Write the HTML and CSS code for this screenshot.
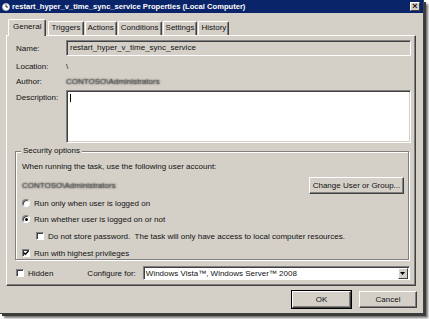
FILE: index.html
```html
<!DOCTYPE html>
<html>
<head>
<meta charset="utf-8">
<link rel="stylesheet" href="styles.css">
</head>
<body>
<div class="window">
  <div class="titlebar">
    <svg class="ticon" width="8" height="8" viewBox="0 0 8 8"><circle cx="4" cy="4" r="3.5" fill="#fff" stroke="#c8c8d8" stroke-width="0.8"/><path d="M4 1.5V4H6" stroke="#223" stroke-width="1" fill="none"/></svg>
    <span class="title">restart_hyper_v_time_sync_service Properties (Local Computer)</span>
    <span class="close">×</span>
  </div>
  <div class="main">
    <div class="tabs">
      <div class="tab active">General</div>
      <div class="tab">Triggers</div>
      <div class="tab">Actions</div>
      <div class="tab">Conditions</div>
      <div class="tab">Settings</div>
      <div class="tab">History</div>
    </div>
    <div class="panel">
      <div class="row row-name">
        <span class="lbl">Name:</span>
        <div class="field ro">restart_hyper_v_time_sync_service</div>
      </div>
      <div class="row row-loc">
        <span class="lbl">Location:</span>
        <span class="val">\</span>
      </div>
      <div class="row row-author">
        <span class="lbl">Author:</span>
        <span class="val blur">CONTOSO\Administrators</span>
      </div>
      <div class="row row-desc">
        <span class="lbl top">Description:</span>
        <div class="field area"><span class="caret"></span></div>
      </div>
      <div class="group">
        <span class="legend">Security options</span>
        <div class="g-line first">When running the task, use the following user account:</div>
        <div class="g-account">
          <span class="blur">CONTOSO\Administrators</span>
          <span class="btn chg">Change User or Group...</span>
        </div>
        <div class="opt o1"><span class="radio"></span><span>Run only when user is logged on</span></div>
        <div class="opt o2"><span class="radio on"></span><span>Run whether user is logged on or not</span></div>
        <div class="opt o3"><span class="check"></span><span>Do not store password.&nbsp; The task will only have access to local computer resources.</span></div>
        <div class="opt o4"><span class="check"><svg width="6" height="6" viewBox="0 0 6 6"><path d="M0.5 2.5L2.3 4.3L5.5 1" stroke="#000" stroke-width="1.3" fill="none"/></svg></span><span>Run with highest privileges</span></div>
      </div>
      <div class="bottom-row">
        <span class="check"></span><span class="hidden-lbl">Hidden</span>
        <span class="cfg-lbl">Configure for:</span>
        <div class="combo"><span class="combo-text">Windows Vista™, Windows Server™ 2008</span><span class="drop"><svg width="5" height="3" viewBox="0 0 5 3"><path d="M0 0H5L2.5 3Z" fill="#000"/></svg></span></div>
      </div>
    </div>
    <div class="buttons">
      <span class="btn ok">OK</span>
      <span class="btn cancel">Cancel</span>
    </div>
  </div>
</div>
</body>
</html>
```
FILE: styles.css
```css
* { box-sizing: border-box; }
html, body { margin: 0; background: #fff; }
body {
  font-family: "Liberation Sans", Arial, sans-serif;
  font-size: 8px;
  color: #111;
  width: 429px;
  height: 319px;
  overflow: hidden;
}
.window {
  width: 424px;
  height: 314px;
  background: #d4d0c8;
  border-right: 1px solid #404040;
  border-bottom: 1px solid #404040;
  box-shadow: 2px 2px 0 #3a3a3a, 4px 4px 2px rgba(0,0,0,0.55);
}
.titlebar {
  height: 13px;
  background: #0a246a;
  display: flex;
  align-items: center;
  padding-left: 2px;
}
.ticon { margin-right: 2px; }
.title {
  color: #fff;
  font-weight: bold;
  font-size: 7.6px;
  white-space: nowrap;
}
.close {
  margin-left: auto;
  margin-right: 3px;
  width: 10px;
  height: 9px;
  background: #d4d0c8;
  border: 1px solid;
  border-color: #fff #404040 #404040 #fff;
  font-size: 9px;
  line-height: 6px;
  text-align: center;
  font-weight: bold;
}
.main { padding: 0 7px 0 6px; }
.tabs {
  display: flex;
  align-items: flex-end;
  height: 16px;
  margin-top: 6px;
  padding-left: 2px;
  gap: 1px;
  position: relative;
  z-index: 2;
}
.tab {
  height: 14px;
  padding: 0 2px;
  border: 1px solid;
  border-color: #fff #404040 transparent #fff;
  border-bottom: none;
  border-radius: 2px 2px 0 0;
  box-shadow: inset -1px 0 #808080;
  line-height: 12px;
  background: #d4d0c8;
}
.tab.active {
  height: 17px;
  margin-bottom: -1px;
  line-height: 14px;
  padding: 0 4px;
  margin-right: 1px;
}
.panel {
  height: 251px;
  border: 1px solid;
  border-color: #fff #404040 #404040 #fff;
  box-shadow: inset -1px -1px #808080;
  position: relative;
  z-index: 1;
}
.row { display: flex; align-items: center; padding-left: 9px; }
.lbl { width: 50px; flex: none; }
.lbl.top { align-self: flex-start; padding-top: 3px; }
.row-name { margin-top: 4px; height: 16px; }
.row-loc { margin-top: 5px; height: 11px; }
.row-author { margin-top: 4px; height: 11px; }
.row-desc { margin-top: 3px; align-items: flex-start; }
.field {
  width: 345px;
  border: 1px solid;
  border-color: #808080 #fff #fff #808080;
  box-shadow: inset 1px 1px #404040, inset -1px -1px #d4d0c8;
}
.field.ro {
  height: 16px;
  line-height: 14px;
  padding-left: 3px;
  background: #d4d0c8;
}
.field.area {
  height: 53px;
  background: #fff;
  padding: 3px 0 0 3px;
}
.caret { display: block; width: 1px; height: 8px; background: #000; }
.blur { color: transparent; text-shadow: 0 0 1.5px #444, 0 0 1.5px #555; }
.group {
  position: relative;
  margin: 8px 6px 0 8px;
  height: 109px;
  border: 1px solid #808080;
  box-shadow: inset 1px 1px #fff, 1px 1px #fff;
  padding: 0 0 0 6px;
}
.legend {
  position: absolute;
  left: 5px;
  top: -6px;
  padding: 0 2px;
  background: #d4d0c8;
  line-height: 10px;
}
.g-line { line-height: 10px; }
.g-line.first { margin-top: 10px; }
.g-account {
  display: flex;
  align-items: center;
  justify-content: space-between;
  height: 17px;
  margin-top: 5px;
  padding-right: 4px;
}
.btn {
  display: flex;
  align-items: center;
  justify-content: center;
  height: 17px;
  background: #d4d0c8;
  border: 1px solid;
  border-color: #fff #404040 #404040 #fff;
  box-shadow: inset -1px -1px #808080;
}
.chg { width: 95px; }
.opt { display: flex; align-items: center; height: 10px; gap: 4px; }
.o1 { margin-top: 4px; }
.o2 { margin-top: 6px; }
.o3 { margin-top: 7px; padding-left: 14px; }
.o4 { margin-top: 7px; }
.radio {
  width: 8px;
  height: 8px;
  border-radius: 50%;
  border: 1px solid;
  border-color: #808080 #fff #fff #808080;
  background: #fff;
  box-shadow: inset 1px 1px #404040;
  display: flex;
  align-items: center;
  justify-content: center;
  flex: none;
}
.radio.on::after {
  content: "";
  width: 3px;
  height: 3px;
  border-radius: 50%;
  background: #000;
}
.check {
  width: 8px;
  height: 8px;
  flex: none;
  background: #fff;
  border: 1px solid;
  border-color: #808080 #fff #fff #808080;
  box-shadow: inset 1px 1px #404040;
  display: flex;
  align-items: center;
  justify-content: center;
}
.bottom-row {
  display: flex;
  align-items: center;
  height: 14px;
  margin-top: 6px;
  padding-left: 9px;
}
.hidden-lbl { margin-left: 4px; }
.cfg-lbl { margin-left: 34px; }
.combo {
  margin-left: 7px;
  width: 267px;
  height: 14px;
  background: #fff;
  border: 1px solid;
  border-color: #808080 #fff #fff #808080;
  box-shadow: inset 1px 1px #404040;
  display: flex;
  align-items: center;
  padding: 0 1px 0 2px;
}
.combo-text { flex: 1; }
.drop {
  width: 10px;
  height: 11px;
  background: #d4d0c8;
  border: 1px solid;
  border-color: #fff #404040 #404040 #fff;
  display: flex;
  align-items: center;
  justify-content: center;
}
.buttons {
  display: flex;
  justify-content: flex-end;
  gap: 8px;
  margin-top: 5px;
  margin-right: -1px;
}
.ok { width: 59px; outline: 1px solid #000; outline-offset: 0; }
.cancel { width: 58px; }
```
